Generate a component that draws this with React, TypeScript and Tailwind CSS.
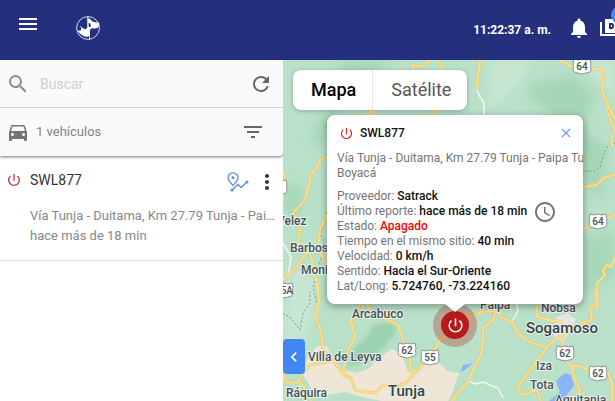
import type { ReactNode } from "react";
import {
  MdAccessTime,
  MdChevronLeft,
  MdDirectionsCar,
  MdFilterList,
  MdMenu,
  MdMoreVert,
  MdNotifications,
  MdPowerSettingsNew,
  MdRefresh,
  MdSearch,
} from "react-icons/md";

const minorRoads = [
  "M201 55V43L197 37L194 30",
  "M187 322L194 324L200 322L207 325L215 328L220 338",
  "M229 262L235 251L233 240",
  "M0 183L8 197L5 217",
];

const dottedBorders = [
  "M332 83L324 87L320 96L317 107L312 111H300",
  "M0 253L8 258L17 270L20 253L27 243V232",
  "M44 152L38 173L42 186L36 205L30 227L34 243",
];

const roads = [
  "M197 0L195 17L194 30",
  "M277 0L290 7L309 9L318 9L321 14L319 30L324 43L332 60",
  "M323 48L328 60L332 73M329 75V86",
  "M300 127L314 125L320 118L332 115",
  "M300 170L308 164L324 158L332 155",
  "M314 250V223L322 215L320 210L324 205L328 207L332 198",
  "M312 230L314 243L307 248L309 260L299 263L280 273L264 287L235 327L239 335L254 330L258 341",
  "M182 258L195 253L204 251L214 252L219 258L229 262L234 272L244 281L264 287",
  "M212 253L210 260L200 268V283L197 297L190 310L185 322L177 330L169 341",
  "M254 243V257L267 260L280 262",
  "M280 273V298L287 305L300 307L307 312L324 310L329 323V341",
  "M289 307L292 320L297 330L294 341",
  "M35 225L36 240L33 257L38 273L40 290L50 300L60 315L68 318L72 330L83 332L92 333L100 325L110 327L123 323L132 313L147 297L157 280L170 270",
  "M83 243L90 253L115 265L120 280L127 296V310L132 314",
  "M77 245L68 260L72 277L65 290L61 307V315",
  "M0 313L3 322L15 323L20 313L27 305L43 302L50 300",
  "M17 322L24 331L28 341",
  "M28 117L22 140L10 153L17 170L15 183L25 192L13 207L0 220",
  "M44 155L37 170L35 187L27 193L31 210L35 230",
  "M30 190L38 194L44 205",
  "M44 97L37 100L34 107L26 118",
  "M83 54L88 51L95 53M148 54L154 49",
  "M130 10V5L138 7L148 0M156 0L160 10",
  "M0 112L2 119",
];

const places = [
  { name: "Velez", x: -6, y: 165 },
  { name: "Barbosa", x: 7, y: 192 },
  { name: "Moniquirá", x: 18, y: 214 },
  { name: "Arcabuco", x: 69, y: 258 },
  { name: "Villa de Leyva", x: 25, y: 301 },
  { name: "Ráquira", x: 3, y: 337 },
  { name: "Paipa", x: 197, y: 249 },
  { name: "Nobsa", x: 258, y: 252 },
  { name: "Iza", x: 253, y: 310 },
  { name: "Tota", x: 247, y: 329 },
  { name: "Aquitania", x: 272, y: 344 },
];

const cities = [
  { name: "Tunja", x: 105, y: 336 },
  { name: "Sogamoso", x: 243, y: 273 },
];

const shields = [
  { route: "64", x: 299, y: 6 },
  { route: "64", x: 315, y: 161 },
  { route: "62", x: 124, y: 290 },
  { route: "55", x: 147, y: 297 },
  { route: "62", x: 282, y: 293 },
  { route: "62", x: 315, y: 313 },
  { route: "45A", x: 1, y: 230 },
  { route: "", x: -5, y: 127 },
];

function MapCanvas() {
  return (
    <svg className="absolute inset-0 h-full w-full" aria-label="Mapa de Boyacá">
      <defs>
        <filter id="terrain" x="-20%" y="-20%" width="140%" height="140%">
          <feGaussianBlur stdDeviation="5" />
        </filter>
      </defs>
      <rect width="100%" height="100%" fill="#b9e0c8" />
      <g filter="url(#terrain)" opacity="0.6">
        <path fill="#97d1ab" d="M60 0H108L95 12L70 20L50 62L38 90L28 78L45 45ZM245 25L290 15L312 35L300 70L270 55L248 38ZM285 55L325 90L318 140L300 120Z" />
        <path fill="#9bd4ae" d="M0 120L20 130L15 160L0 150ZM300 180L332 170V215L300 235Z" />
        <path fill="#d2eadb" d="M205 0H250L235 25L207 50ZM300 0H332V40ZM8 205L35 220L30 260L10 300L0 280Z" />
      </g>
      <path fill="#8fcba4" opacity="0.7" filter="url(#soft)" d="M64 308L72 288L84 277L90 266L107 262L114 269L102 287L83 301Z" />
      <filter id="soft"><feGaussianBlur stdDeviation="2" /></filter>
      <path fill="#efe6d8" d="M19 313L25 298L34 286L43 286L58 309L74 313L86 308L96 298L109 289L119 294L125 312L137 308L147 300L158 304L164 311L176 313L170 331L165 341H98L80 337L62 332L33 337L27 326Z" />
      <path fill="#e5e5e5" d="M273 257L285 253L293 260L288 270L280 283L271 276Z" />
      <path fill="#8ab4f8" d="M273 321L282 313L288 315L291 326L285 333L281 341H266L277 332ZM177 312L180 305L190 303L182 310ZM208 250L213 252L210 257Z" />
      <g fill="none" stroke="#f4f8f4" strokeWidth="1.5">
        {minorRoads.map((d) => <path key={d} d={d} />)}
      </g>
      <g fill="none" stroke="#7c9a88" strokeWidth="1" strokeDasharray="2 2">
        {dottedBorders.map((d) => <path key={d} d={d} />)}
      </g>
      <g fill="none" strokeLinejoin="round" stroke="#e8c878" strokeWidth="3">
        {roads.map((d) => <path key={d} d={d} />)}
      </g>
      <g fill="none" strokeLinejoin="round" stroke="#fbe08c" strokeWidth="1.8">
        {roads.map((d) => <path key={d} d={d} />)}
      </g>
      {shields.map(({ route, x, y }) => (
        <g key={`${x}-${y}`} transform={`translate(${x} ${y})`}>
          <path d="M-8 -7Q-4 -5 0 -7Q4 -5 8 -7L9 -2Q8 0 9 4Q8 7 4 7L0 8L-4 7Q-8 7 -9 4Q-8 0 -9 -2Z" fill="#fff" stroke="#8d9296" />
          <text y="4" textAnchor="middle" className="fill-[#4a4f54] text-[10px] font-medium">{route}</text>
        </g>
      ))}
      <g className="fill-[#4b5054] stroke-[#e8f3eb] text-xs font-medium" strokeWidth="2" paintOrder="stroke">
        {places.map(({ name, x, y }) => <text key={name} x={x} y={y}>{name}</text>)}
      </g>
      <g className="fill-[#3c4043] stroke-[#e8f3eb] text-[15px] font-medium" strokeWidth="2" paintOrder="stroke">
        {cities.map(({ name, x, y }) => <text key={name} x={x} y={y}>{name}</text>)}
      </g>
    </svg>
  );
}

function DogLogo() {
  return (
    <svg viewBox="0 0 24 24" className="h-6 w-6" aria-label="Satrack">
      <circle cx="12" cy="12" r="11.4" fill="none" stroke="#d5d9ef" strokeWidth="1" />
      <path fill="none" stroke="#fff" strokeWidth="0.800" d="M13.500 13V23.500M11.800 1V13" />
      <path fill="#fff" d="M11.600 2.300L14 3L16.500 5.600L20 6.500L23 6.300L23.400 9.500L21.500 12L18.500 12.500L15.500 12.300L14 14V19.500L11.500 20.700L8.500 20.500L5 18.500L1.300 14.800L4.800 14.500L5.300 12.500L4 9.500L6.800 12.300L9.500 13.300L11.600 11.500Z" />
      <path fill="#242f7e" d="M12.600 6.500L14.200 7.500L15 10.500L13.500 11.300L12.600 10Z" />
    </svg>
  );
}

function RouteIcon() {
  return (
    <svg viewBox="0 0 22 20" className="h-5 w-[22px]" fill="none" stroke="#5b8fe8" strokeWidth="1.3">
      <path d="M6 13.5C3.500 10.500 1 8.500 1 5.800A5 5 0 0 1 11 5.800C11 8.500 8.500 10.500 6 13.500Z" />
      <circle cx="6" cy="5.800" r="0.800" fill="#5b8fe8" />
      <path d="M5 18L11 12.500L14 15.500L20 10" />
      <circle cx="5" cy="18" r="0.900" fill="#5b8fe8" />
      <circle cx="20" cy="10" r="0.900" fill="#5b8fe8" />
    </svg>
  );
}

function Header() {
  return (
    <header className="flex h-15 shrink-0 items-start overflow-hidden bg-[#242f7e] pl-4 text-white">
      <button aria-label="Menú" className="mt-3"><MdMenu size={24} /></button>
      <div className="mt-4 ml-9"><DogLogo /></div>
      <time className="mt-5 ml-auto text-xs leading-5 font-bold">11:22:37 a. m.</time>
      <button aria-label="Notificaciones" className="mt-4 ml-4"><MdNotifications size={24} /></button>
      <button aria-label="Videos" className="relative -mr-2 mt-4 ml-2">
        <svg viewBox="0 0 24 24" className="h-6 w-6">
          <path d="M2 6V19H20" fill="none" stroke="#fff" strokeWidth="2" />
          <path fill="#fff" fillRule="evenodd" d="M6 3H23V17H6ZM10 7V13H13Q15 13 15 10Q15 7 13 7ZM12 9H13V11H12ZM17 10H20V13H17Z" />
        </svg>
        <span className="absolute -top-2.5 left-3 h-4.5 w-4.5 rounded-full bg-[#4285f4]" />
      </button>
    </header>
  );
}

function Sidebar() {
  return (
    <aside className="w-[283px] shrink-0 bg-white">
      <div className="rounded-br bg-[#fafafa] shadow-[0_1px_3px_rgba(0,0,0,0.55)]">
        <form role="search" className="flex h-12 items-center border-b border-[#d4d4d4] pr-2.5 pl-1.5">
          <label htmlFor="search" aria-label="Buscar"><MdSearch size={24} color="#8c8c8c" /></label>
          <input id="search" type="search" placeholder="Buscar" className="ml-2.5 min-w-0 flex-1 bg-transparent text-sm outline-none placeholder:text-[#cfcfcf]" />
          <button type="button" aria-label="Actualizar"><MdRefresh size={24} color="#666" /></button>
        </form>
        <div className="flex h-12 items-center pr-4.5 pl-1.5 text-[13px] text-[#858585]">
          <MdDirectionsCar size={24} color="#757575" />
          <span className="ml-1.5">1 vehículos</span>
          <button aria-label="Filtrar" className="ml-auto"><MdFilterList size={24} color="#666" /></button>
        </div>
      </div>
      <article className="border-b border-[#dedede] pt-3 pb-3.5 pl-1.5">
        <div className="flex h-6 items-center">
          <MdPowerSettingsNew size={16} color="#c0394a" />
          <h2 className="ml-2 text-sm text-[#333]">SWL877</h2>
          <button aria-label="Ver recorrido" className="mt-1 ml-auto"><RouteIcon /></button>
          <button aria-label="Más opciones" className="mt-1 mr-1 ml-1.5"><MdMoreVert size={24} color="#333" /></button>
        </div>
        <div className="mt-3.5 mr-2 ml-6 text-[13px] leading-5 text-[#888]">
          <p className="truncate">Vía Tunja - Duitama, Km 27.79 Tunja - Paipa Tunja, Boyacá</p>
          <p>hace más de 18 min</p>
        </div>
      </article>
    </aside>
  );
}

function Detail({ label, children }: { label: string; children: ReactNode }) {
  return (
    <div>
      <dt className="inline">{label}: </dt>
      <dd className="inline font-medium text-[#111]">{children}</dd>
    </div>
  );
}

function VehiclePopup() {
  return (
    <section className="absolute top-[55px] left-11 w-64 rounded-lg bg-white pt-2 pb-2.5 pl-2.5 text-xs leading-[15px] text-[#757575] shadow-[0_2px_7px_1px_rgba(0,0,0,0.3)]">
      <div className="flex h-5 items-center pr-2.5 pl-0.5">
        <MdPowerSettingsNew size={15} color="#d32f2f" />
        <h2 className="ml-1.5 font-medium text-[#111]">SWL877</h2>
        <button aria-label="Cerrar" className="ml-auto">
          <svg viewBox="0 0 14 14" className="h-3.5 w-3.5" stroke="#6f9cf0" strokeWidth="1.2"><path d="M3 3L11 11M11 3L3 11" /></svg>
        </button>
      </div>
      <div className="mt-2 overflow-hidden whitespace-nowrap">
        <p>Vía Tunja - Duitama, Km 27.79 Tunja - Paipa Tunja</p>
        <p>Boyacá</p>
      </div>
      <dl className="mt-2">
        <Detail label="Proveedor">Satrack</Detail>
        <div className="flex h-[15px] items-center">
          <Detail label="Último reporte">hace más de 18 min</Detail>
          <MdAccessTime size={24} color="#777" className="ml-1.5" />
        </div>
        <Detail label="Estado"><span className="text-[#f00]">Apagado</span></Detail>
        <Detail label="Tiempo en el mismo sitio">40 min</Detail>
        <Detail label="Velocidad">0 km/h</Detail>
        <Detail label="Sentido">Hacia el Sur-Oriente</Detail>
        <Detail label="Lat/Long">5.724760, -73.224160</Detail>
      </dl>
      <svg viewBox="0 0 20 10" className="absolute top-full left-[118px] h-2.5 w-5"><path fill="#fff" d="M0 0H20L10 8Z" /></svg>
    </section>
  );
}

export default function App() {
  return (
    <div className="flex min-h-screen flex-col font-[Roboto,sans-serif]">
      <Header />
      <div className="flex flex-1">
        <Sidebar />
        <main className="relative min-w-0 flex-1 overflow-hidden">
          <MapCanvas />
          <div className="absolute top-2.5 left-2.5 flex h-10 rounded-lg bg-white text-lg shadow-[0_1px_4px_rgba(0,0,0,0.25)]">
            <button className="px-4.5 pr-4 font-medium text-black">Mapa</button>
            <button className="border-l border-[#e6e6e6] px-4.5 pr-4 text-[#565656]">Satélite</button>
          </div>
          <div className="absolute top-[243px] left-[150px] flex h-11 w-11 items-center justify-center rounded-full bg-[#b7191c]/30">
            <div className="flex h-7 w-7 items-center justify-center rounded-full bg-[#b7191c] text-white"><MdPowerSettingsNew size={19} /></div>
          </div>
          <VehiclePopup />
          <button aria-label="Ocultar panel" className="absolute top-[279px] left-0 flex h-[35px] w-[22px] items-center justify-center rounded bg-[#4285f4] text-white">
            <MdChevronLeft size={20} />
          </button>
        </main>
      </div>
    </div>
  );
}
